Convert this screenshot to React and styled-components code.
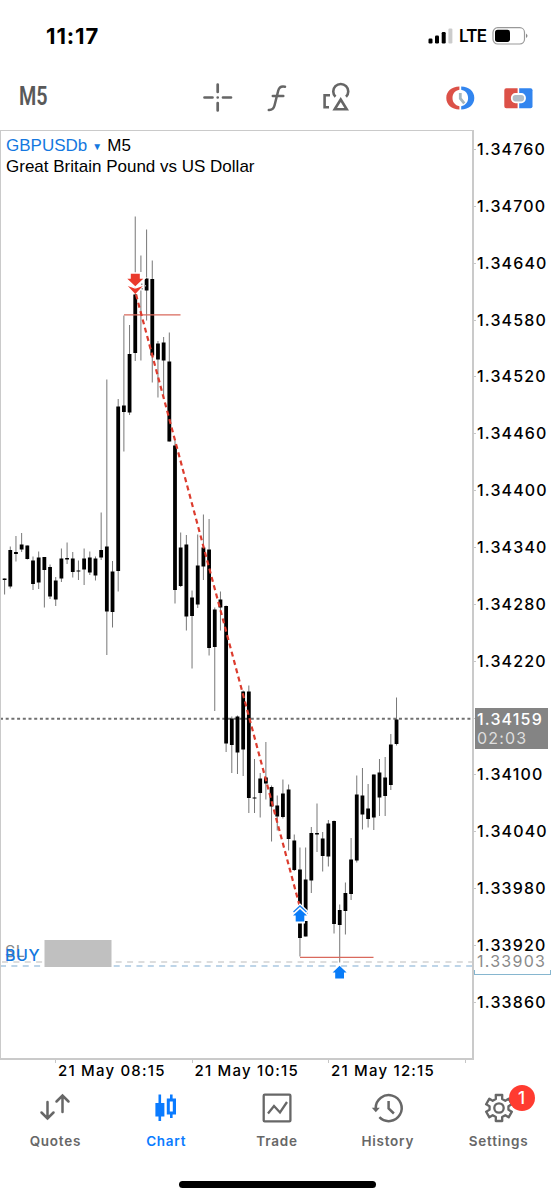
import React from 'react';
import styled, { createGlobalStyle } from 'styled-components';

const GlobalStyle = createGlobalStyle`
  * {
    box-sizing: border-box;
  }

  body {
    margin: 0;
    background: #fff;
  }
`;

const Screen = styled.div`
  width: 554px;
  height: 1200px;
  display: flex;
  flex-direction: column;
  overflow: hidden;
  background: #fff;
  color: #000;
  font-family: Inter, 'Liberation Sans', sans-serif;
`;

const StatusBar = styled.header`
  height: 64px;
  padding: 7px 25px 0 46px;
  display: flex;
  align-items: center;
  justify-content: space-between;
`;

const Time = styled.span`
  font-size: 22px;
  line-height: 24px;
  font-weight: 700;
  letter-spacing: 0.9px;
`;

const StatusIcons = styled.div`
  display: flex;
  align-items: center;
`;

const Network = styled.span`
  margin: 1px 5px 0 5px;
  width: 28px;
  font-size: 17px;
  line-height: 20px;
  font-weight: 600;
  letter-spacing: -0.8px;
`;

const Toolbar = styled.div`
  height: 66px;
  padding: 0 20px 0 19px;
  display: flex;
  align-items: center;
`;

const Timeframe = styled.span`
  width: 182px;
  color: #595959;
  font-family: Roboto, sans-serif;
  font-size: 25px;
  line-height: 30px;
  font-weight: 600;

  span {
    display: inline-block;
    transform: scaleX(0.79);
    transform-origin: left;
  }
`;

const Tools = styled.div`
  display: flex;
  flex: 1;
  gap: 27px;
`;

const Trading = styled.div`
  display: flex;
  gap: 28px;
`;

const ChartRow = styled.main`
  height: 930px;
  display: flex;
`;

const Plot = styled.section`
  position: relative;
  width: 474px;
  border: solid #cacaca;
  border-width: 1px 2px 2px 1px;

  > svg {
    display: block;
  }
`;

const Legend = styled.div`
  position: absolute;
  top: 4px;
  left: 5px;
  font-family: 'Liberation Sans', Arial, sans-serif;
  font-size: 17px;
  line-height: 21px;
  white-space: nowrap;
`;

const LegendLine = styled.div`
  height: 20.5px;
`;

const Symbol = styled.span`
  color: #1478e0;

  small {
    display: inline-block;
    width: 20px;
    text-align: center;
    font-size: 10px;
    vertical-align: 1px;
  }
`;

const OrderTag = styled.span`
  position: absolute;
  top: ${props => props.$top}px;
  left: 4px;
  color: ${props => props.$color};
  font-size: 16px;
  line-height: 20px;
  font-weight: ${props => props.$weight};
  letter-spacing: 0.6px;
`;

const PriceAxis = styled.aside`
  position: relative;
  flex: 1;
  padding-top: 9px;
`;

const Price = styled.div`
  height: 56.87px;
  display: flex;
  align-items: flex-start;
  font-size: 16px;
  line-height: 20px;
  font-weight: 500;
  letter-spacing: 1.15px;

  &::before {
    content: '';
    width: 2px;
    height: 1px;
    margin: 10px 1px 0 0;
    background: #c6c6c6;
  }
`;

const PriceTag = styled.div`
  position: absolute;
  top: 578px;
  left: 1px;
  width: 73px;
  height: 41px;
  padding: 2px 0 0 2px;
  background: #848484;
  color: #fff;
  font-size: 16px;
  line-height: 19px;
  font-weight: 500;
  letter-spacing: 1.15px;

  div + div {
    color: #dedede;
    font-weight: 400;
  }
`;

const StopPrice = styled.div`
  position: absolute;
  top: 821px;
  left: 0;
  width: 77px;
  height: 24px;
  padding: 0 0 0 3px;
  color: #8a8a8a;
  font-size: 16px;
  line-height: 20px;
  font-weight: 400;
  letter-spacing: 1.25px;

  &::after {
    content: '';
    position: absolute;
    left: 0;
    right: 0;
    bottom: 0;
    height: 4px;
    border: solid #86b6cf;
    border-width: 0 1px 1px;
  }
`;

const TimeAxis = styled.div`
  height: 22px;
  padding-left: 55px;
  display: flex;
`;

const TimeLabel = styled.div`
  width: 136.5px;
  flex-shrink: 0;
  padding: 0 0 0 3px;
  font-size: 15px;
  line-height: 21px;
  font-weight: 500;
  letter-spacing: 1.2px;
  white-space: nowrap;
  background: linear-gradient(#c6c6c6, #c6c6c6) 0 0 / 1px 3px no-repeat;
`;

const TabBar = styled.nav`
  height: 99px;
  padding-top: 9px;
  display: flex;
`;

const Tab = styled.div`
  flex: 1;
  display: flex;
  flex-direction: column;
  align-items: center;
  color: ${props => (props.$active ? '#0a7bff' : '#676767')};
  font-size: 13.5px;
  line-height: 18px;
  font-weight: 600;
  letter-spacing: ${props => props.$spacing || 0.75}px;
`;

const TabIcon = styled.div`
  position: relative;
  height: 34px;
  margin-bottom: 7px;
`;

const Badge = styled.span`
  position: absolute;
  top: -6px;
  left: 27px;
  width: 26px;
  height: 26px;
  border-radius: 50%;
  background: #ff3b30;
  color: #fff;
  font-size: 17px;
  line-height: 26px;
  font-weight: 500;
  text-align: center;
  letter-spacing: 0;
`;

const HomeIndicator = styled.div`
  width: 197px;
  height: 7px;
  margin: 0 auto;
  border-radius: 4px;
  background: #000;
`;

const GRAY = '#676767';

// [high, body top, body bottom, low] in plot pixels from the top of the screen
const candles = [
  [578, 578, 579.5, 594],
  [546, 549.5, 586, 588],
  [535.5, 551.5, 553.5, 561],
  [532.5, 544, 549, 551.5],
  [545, 545, 558.5, 559],
  [556, 560, 583.5, 589.5],
  [551, 557, 582, 588.5],
  [556.5, 556.5, 569.5, 607],
  [564, 566.5, 596, 598.5],
  [576.5, 580, 599, 605.5],
  [548, 558, 578, 581.5],
  [542, 557.5, 559, 563.5],
  [551.5, 558, 571.5, 577],
  [560, 570, 571, 579.5],
  [548, 558, 569, 584.5],
  [551, 557, 572, 574.5],
  [556, 558, 575, 580],
  [512, 549.5, 557, 559.5],
  [379, 546, 611, 654.5],
  [560.5, 571, 611.5, 627],
  [398.5, 406, 570.5, 591],
  [315, 405, 411.5, 451],
  [324.5, 353.5, 412, 414.5],
  [216, 294, 352.5, 360.5],
  [255, 283, 284, 360],
  [229, 278, 290, 320],
  [260, 278.5, 355, 382],
  [340.5, 343, 359, 397],
  [336.5, 342, 360, 397],
  [332, 361, 441, 441],
  [440, 445, 589.5, 603],
  [532, 547, 585.5, 586.5],
  [534.5, 544, 616, 630],
  [590, 597, 615.5, 668],
  [534, 565, 604, 607.5],
  [514, 547, 566, 579.5],
  [518.5, 549, 647.5, 655],
  [607, 609, 646.5, 710.5],
  [591, 599, 607, 630],
  [605, 605.5, 743, 751.5],
  [716, 718, 744.5, 772.5],
  [715, 716, 752, 773.5],
  [690, 691, 749, 775.5],
  [685, 691, 797.5, 812.5],
  [758.5, 797, 798, 812.5],
  [772.5, 778, 792.5, 817],
  [741.5, 777, 783, 799],
  [785, 786.5, 806, 841],
  [795, 805, 816, 830],
  [779, 793, 816.5, 818],
  [784, 789, 838.5, 850],
  [834, 840, 869.5, 870.5],
  [847, 869, 937.5, 956],
  [847, 879, 936, 936],
  [826.5, 832.5, 880, 892.5],
  [803, 832.5, 834, 851.5],
  [831.5, 838, 855.5, 871],
  [819.5, 823, 856, 866],
  [820, 820.5, 923.5, 933],
  [904, 909.5, 924.5, 962],
  [882, 892.5, 910.5, 934],
  [837.5, 859, 893.5, 899.5],
  [775, 794, 860, 862],
  [767.5, 795, 814, 829],
  [783.5, 808, 818.5, 827],
  [774, 774, 817, 829.5],
  [758.5, 772, 797, 815.5],
  [756.5, 777, 795.5, 815.5],
  [733.5, 744, 784.5, 789.5],
  [697, 719, 743.5, 745],
];

const prices = [
  '1.34760', '1.34700', '1.34640', '1.34580', '1.34520', '1.34460', '1.34400', '1.34340',
  '1.34280', '1.34220', '', '1.34100', '1.34040', '1.33980', '1.33920', '1.33860',
];

const Candle = ({ index, data }) => {
  const [high, top, bottom, low] = data;
  const x = 4.6 + index * 5.68;
  return (
    <g>
      <path d={`M${x} ${high}V${low}`} stroke="#777" strokeWidth="1" />
      <rect x={x - 1.9} y={top} width="3.8" height={bottom - top} fill="#000" />
    </g>
  );
};

const CandleChart = () => (
  <svg width="471" height="927" viewBox="1 130.500 471 927" fill="none">
    <path d="M0 961.5H472" stroke="#bcbcbc" strokeWidth="1.200" strokeDasharray="6 5.370" strokeDashoffset="-2" />
    <path d="M0 965.5H472" stroke="#7fabd2" strokeWidth="1.200" strokeDasharray="6 5.370" strokeDashoffset="0" />
    <path d="M0 718.2H472" stroke="#707070" strokeWidth="2" strokeDasharray="3 2.700" />
    {candles.map((data, i) => (
      <Candle key={i} index={i} data={data} />
    ))}
    <path d="M124 314.300H180.500M300 956.800H373.500" stroke="#d9695c" strokeWidth="1.200" />
    <rect x="44.500" y="939.500" width="67" height="27" fill="#c0c0c0" />
    <path d="M138 271.500h5.500v18.500h-5.500z" fill="#fff" />
    <path d="M141 283h1.500v1.500H141zM144.500 284.500h1.500v1.500h-1.500zM141.500 287.500h1.500v1.500h-1.500z" fill="#9a9a9a" />
    <path d="M136 294L299.500 905" stroke="#dc3c2e" strokeWidth="2.200" strokeDasharray="5 3.600" />
    <path
      d="M130.800 273.200h9v5h3.500l-8 7.500-8-7.500h3.500z"
      fill="#ea3a2c"
      stroke="#fff"
      strokeWidth="3"
      paintOrder="stroke"
    />
    <path
      d="M127.800 285.500l7.500 2.800 7.500-2.800-7.500 8z"
      fill="#ea3a2c"
      stroke="#fff"
      strokeWidth="1"
      paintOrder="stroke"
    />
    <path d="M292 913.500l8-8 8 8v7h-3v2.500h-10v-2.500h-3z" fill="#fff" />
    <path d="M292.500 912.500l7.500-7 7.500 7" stroke="#fff" strokeWidth="4" />
    <path d="M293.500 911.500l6.500-6 6.500 6" stroke="#1b80ee" strokeWidth="1.300" />
    <path d="M300 908.500l7 6.500h-2.700v6h-8.600v-6H293z" fill="#087cf8" />
    <path d="M339.600 965.300l7 6.700h-2.600v6h-8.800v-6h-2.600z" fill="#087cf8" />
  </svg>
);

const SignalIcon = () => (
  <svg width="26" height="18" viewBox="0 0 26 18">
    <rect x="0.500" y="11.500" width="4" height="5" rx="1.200" />
    <rect x="7" y="8.500" width="4" height="8" rx="1.200" />
    <rect x="13.700" y="5" width="4" height="11.500" rx="1.200" />
    <rect x="20.400" y="1.500" width="4" height="15" rx="1.200" fill="#ccc" />
  </svg>
);

const BatteryIcon = () => (
  <svg width="37" height="18" viewBox="0 0 37 18">
    <rect x="1" y="0.700" width="31.500" height="16.300" rx="4.700" fill="none" stroke="#999" strokeWidth="1.200" />
    <rect x="3" y="2.700" width="15" height="12.300" rx="2.700" />
    <path d="M34 6.500q3 2.300 0 4.600z" fill="#888" />
  </svg>
);

const CrosshairIcon = () => (
  <svg width="32" height="32" viewBox="0 0 32 32" stroke="#666" strokeWidth="2.700" strokeLinecap="round">
    <path d="M16.700 3.500v7.500M16.700 22v7.500M3.500 16.500h8M22 16.500h8M16.700 16.500h.01" />
  </svg>
);

const FunctionIcon = () => (
  <svg width="32" height="32" viewBox="0 0 32 32" fill="none" stroke="#666" strokeWidth="2.500" strokeLinecap="round">
    <path d="M25 5.800c-4-.9-5.900.5-6.800 4l-3.700 14.700c-.8 3.300-2.200 4.700-5.700 4.500M12.800 15h10.500" />
  </svg>
);

const ShapesIcon = () => (
  <svg width="32" height="32" viewBox="0 0 32 32" fill="none" stroke="#666" strokeWidth="2.600">
    <path d="M11 14.300H5.600v12H10" />
    <path d="M16.500 15.800a7.500 7.500 0 1 1 10.500 0" />
    <path d="M21.700 18.500l6 9.800H15.700z" />
  </svg>
);

const OneClickIcon = () => (
  <svg width="30" height="30" viewBox="0 0 30 30" fill="none">
    <path d="M13.400 4.500v3.300c-4.300.8-6.900 4-6.900 8.200s2.600 7.400 6.900 8.200v3.300C5.500 27.300.3 22.700.3 16S5.500 4.700 13.400 4.500z" fill="#dc5148" />
    <path d="M15.200 4.500v3.300c4.300.8 6.900 4 6.900 8.200s-2.600 7.400-6.900 8.200v3.300c7.900-.2 13.100-4.800 13.100-11.500S23.100 4.700 15.200 4.500z" fill="#3285ef" />
    <path d="M14.300 11v5.500l4 4.800" stroke="#a5b6bf" strokeWidth="2.800" />
  </svg>
);

const DepthIcon = () => (
  <svg width="30" height="30" viewBox="0 0 30 30">
    <path d="M2.300 6.200h11.300v20H2.300a2 2 0 0 1-2-2v-16a2 2 0 0 1 2-2z" fill="#dc5148" />
    <path d="M15.200 6.200h11.300a2 2 0 0 1 2 2v16a2 2 0 0 1-2 2H15.200z" fill="#3285ef" />
    <rect x="7.800" y="12" width="13.200" height="8.300" rx="3.700" fill="#b1bec8" stroke="#fff" strokeWidth="1.800" />
  </svg>
);

const QuotesIcon = () => (
  <svg width="34" height="34" viewBox="0 0 34 34" fill="none" stroke={GRAY} strokeWidth="2.500" strokeLinecap="round">
    <path d="M9.500 11v16.500M3.500 21.500l6 6 6-6M24.500 21V4.500M18.500 10.500l6-6 6 6" />
  </svg>
);

const ChartIcon = () => (
  <svg width="34" height="34" viewBox="0 0 34 34" fill="#0a7bff">
    <path d="M9.500 3.500h2.600V12h3.300v13.500h-3.300V30H9.500v-4.500H6.400V12h3.100zM21 3.500h2.600v4h3.400V23.500h-3.400V27H21v-3.500h-3.200V7.500H21z" />
    <path d="M20.800 10.500h3v10h-3z" fill="#fff" />
  </svg>
);

const TradeIcon = () => (
  <svg width="34" height="34" viewBox="0 0 34 34" fill="none" stroke={GRAY} strokeWidth="2.300">
    <rect x="3.700" y="3.700" width="26.700" height="26.700" rx="1" />
    <path d="M8 22.500l6-7.500 6 6.500 7-10.500" />
  </svg>
);

const HistoryIcon = () => (
  <svg width="34" height="34" viewBox="0 0 34 34" fill="none" stroke={GRAY} strokeWidth="2.500">
    <path d="M4.700 17A13 13 0 1 1 8.400 26.200" />
    <path d="M.8 16.700h8l-4 4.500z" fill={GRAY} stroke="none" />
    <path d="M17.600 10v7.500l5.300 5" />
  </svg>
);

// six-toothed outline, teeth on the vertical axis
const gearPath = [0, 60, 120, 180, 240, 300]
  .map((deg, i) => {
    const points = [[-19, 9.600], [-14, 13.400], [14, 13.400], [19, 9.600]];
    return points
      .map(([offset, r], j) => {
        const a = ((deg + offset - 90) * Math.PI) / 180;
        return `${i === 0 && j === 0 ? 'M' : 'L'}${(17 + r * Math.cos(a)).toFixed(2)} ${(17 + r * Math.sin(a)).toFixed(2)}`;
      })
      .join('');
  })
  .join('');

const SettingsIcon = () => (
  <svg width="34" height="34" viewBox="0 0 34 34" fill="none" stroke={GRAY} strokeWidth="2.300" strokeLinejoin="round">
    <path d={`${gearPath}Z`} />
    <circle cx="17" cy="17" r="4.700" />
  </svg>
);

const tabs = [
  { label: 'Quotes', Icon: QuotesIcon },
  { label: 'Chart', Icon: ChartIcon, active: true },
  { label: 'Trade', Icon: TradeIcon },
  { label: 'History', Icon: HistoryIcon },
  { label: 'Settings', Icon: SettingsIcon, badge: 1 },
];

const App = () => (
  <>
    <GlobalStyle />
    <Screen>
      <StatusBar>
        <Time>11:17</Time>
        <StatusIcons>
          <SignalIcon />
          <Network>LTE</Network>
          <BatteryIcon />
        </StatusIcons>
      </StatusBar>
      <Toolbar>
        <Timeframe>
          <span>M5</span>
        </Timeframe>
        <Tools>
          <CrosshairIcon />
          <FunctionIcon />
          <ShapesIcon />
        </Tools>
        <Trading>
          <OneClickIcon />
          <DepthIcon />
        </Trading>
      </Toolbar>
      <ChartRow>
        <Plot>
          <CandleChart />
          <Legend>
            <LegendLine>
              <Symbol>
                GBPUSDb<small>▼</small>
              </Symbol>
              M5
            </LegendLine>
            <LegendLine>Great Britain Pound vs US Dollar</LegendLine>
          </Legend>
          <OrderTag $top={810} $color="#8a8a8a" $weight={400}>SL</OrderTag>
          <OrderTag $top={814} $color="#1478e0" $weight={500}>BUY</OrderTag>
        </Plot>
        <PriceAxis>
          {prices.map((price, i) => (
            <Price key={i}>{price}</Price>
          ))}
          <PriceTag>
            <div>1.34159</div>
            <div>02:03</div>
          </PriceTag>
          <StopPrice>1.33903</StopPrice>
        </PriceAxis>
      </ChartRow>
      <TimeAxis>
        <TimeLabel>21 May 08:15</TimeLabel>
        <TimeLabel>21 May 10:15</TimeLabel>
        <TimeLabel>21 May 12:15</TimeLabel>
        <TimeLabel />
      </TimeAxis>
      <TabBar>
        {tabs.map(({ label, Icon, active, badge }) => (
          <Tab key={label} $active={active}>
            <TabIcon>
              <Icon />
              {badge && <Badge>{badge}</Badge>}
            </TabIcon>
            {label}
          </Tab>
        ))}
      </TabBar>
      <HomeIndicator />
    </Screen>
  </>
);

export default App;
